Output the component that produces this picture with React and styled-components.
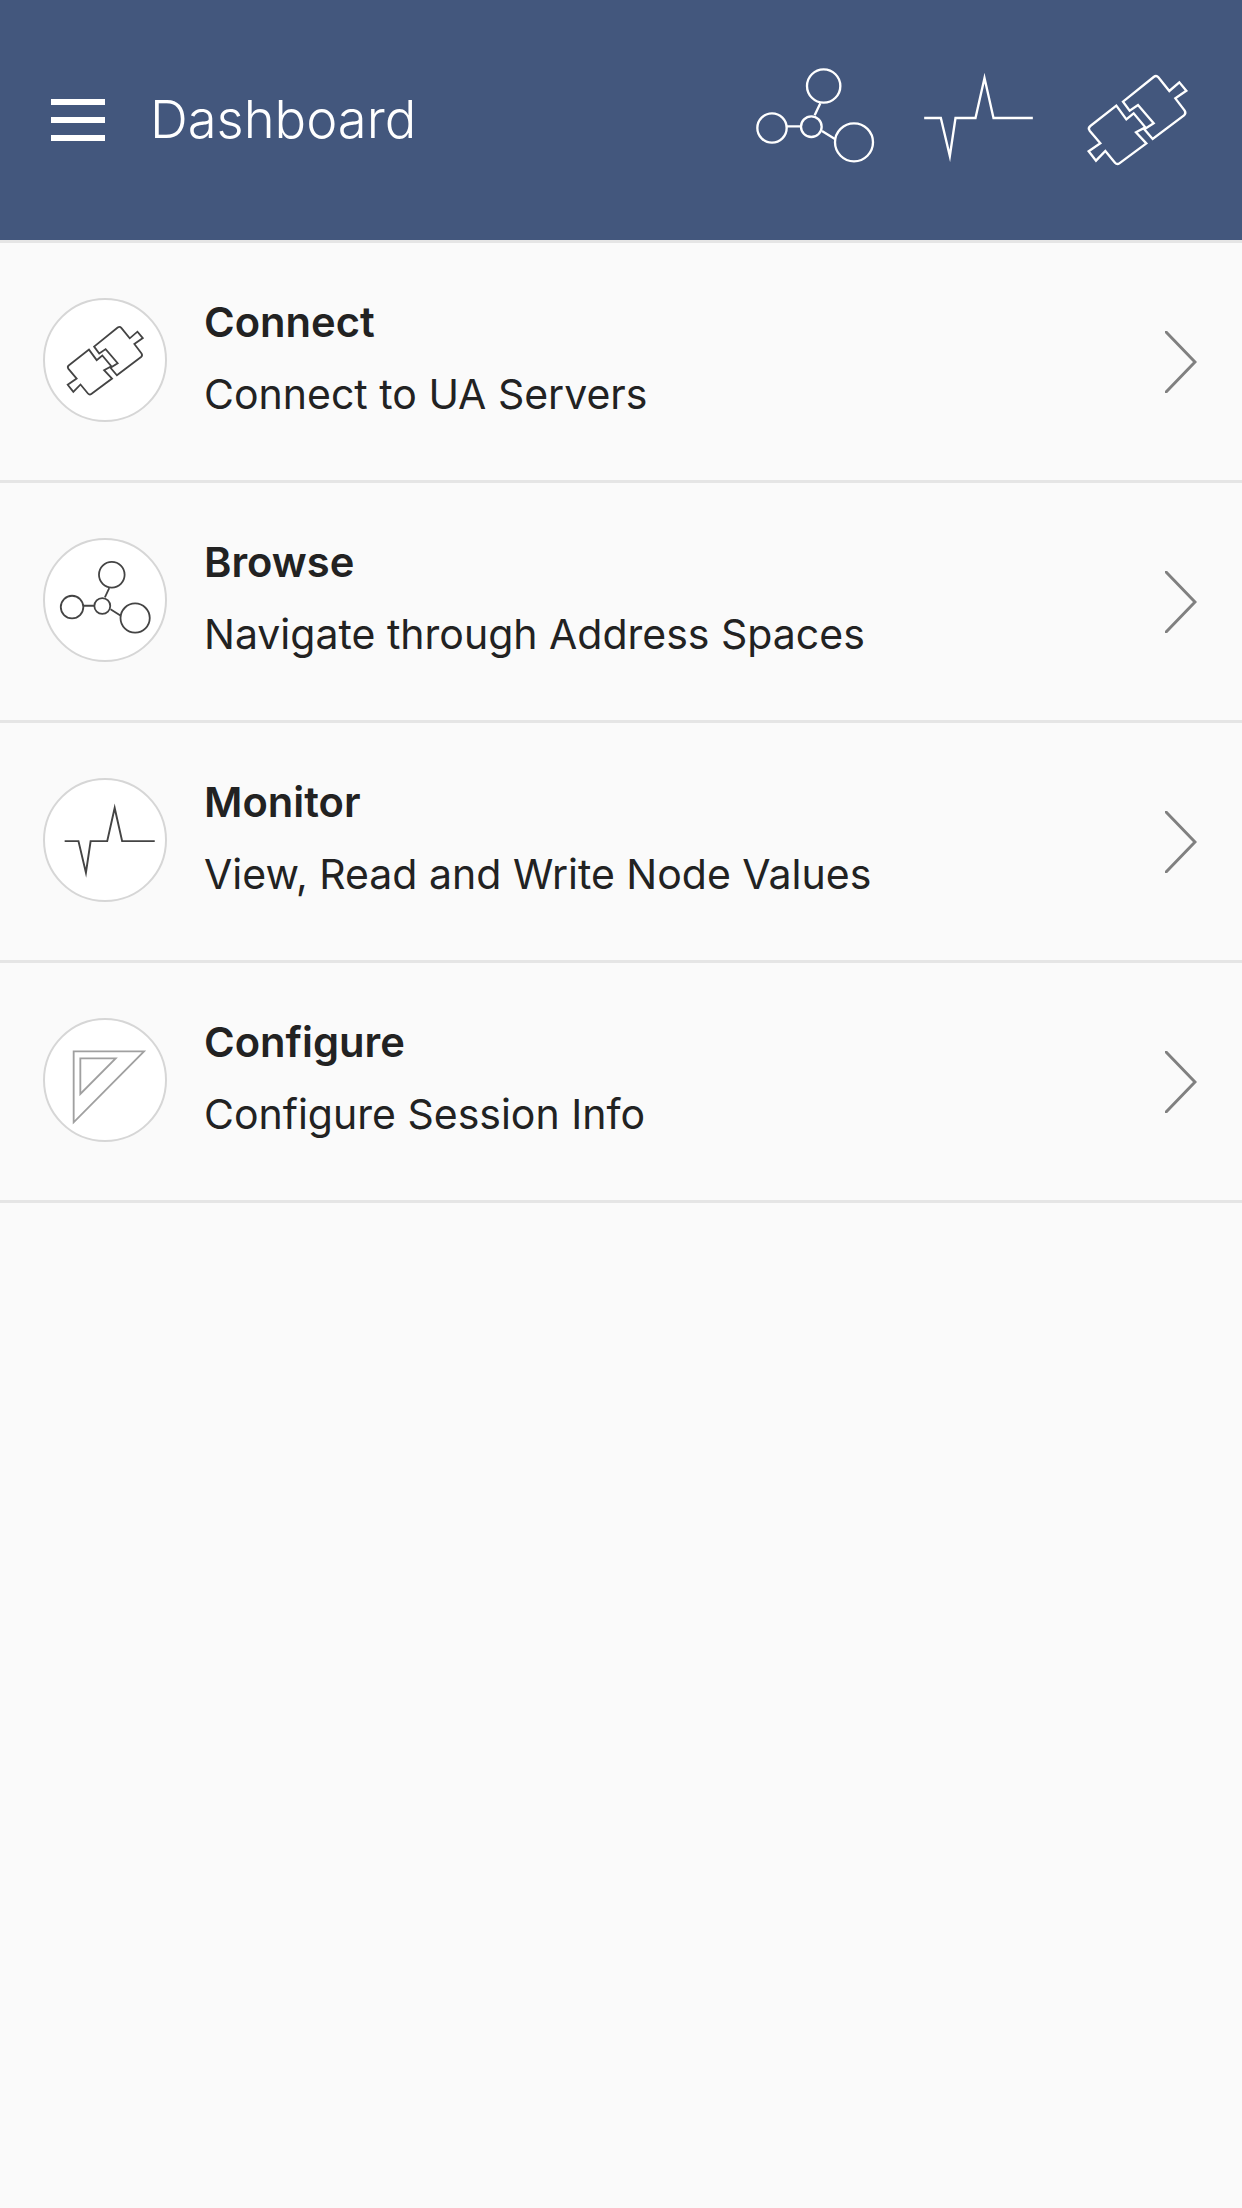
import React from "react";
import styled, { createGlobalStyle } from "styled-components";

const GlobalStyle = createGlobalStyle`
  html, body {
    margin: 0;
    padding: 0;
    background: #fafafa;
    font-family: Inter, "Noto Sans", sans-serif;
  }
`;

const Page = styled.div`
  width: 1242px;
  min-height: 2208px;
  background: #fafafa;
  color: #222;
`;

const Header = styled.header`
  height: 240px;
  background: #43577d;
  display: flex;
  align-items: center;
  padding: 0 54px 0 51px;
  color: #fff;
`;

const MenuButton = styled.div`
  width: 54px;
  height: 42px;
  flex: none;
  display: flex;
  flex-direction: column;
  justify-content: space-between;
  span {
    display: block;
    height: 6px;
    background: #fff;
  }
`;

const Title = styled.h1`
  margin: 0 0 2px 45px;
  font-size: 52.5px;
  font-weight: 300;
  line-height: 60px;
  flex: 1;
`;

const HeaderIcon = styled.svg`
  display: block;
  flex: none;
  height: 120px;
  width: ${(p) => p.$w}px;
  margin-left: ${(p) => p.$gap}px;
  overflow: visible;
  fill: none;
  stroke: #fff;
  stroke-width: 7;
  stroke-miterlimit: 20;
`;

const List = styled.ul`
  list-style: none;
  margin: 0;
  padding: 0;
  border-top: 3px solid #e5e5e5;
`;

const Row = styled.li`
  height: 237px;
  border-bottom: 3px solid #e5e5e5;
  display: flex;
  align-items: center;
  padding: 0 45px 0 42.5px;
`;

const Badge = styled.div`
  width: 124px;
  height: 124px;
  box-sizing: border-box;
  flex: none;
  margin-bottom: 4px;
  border: 2px solid #d6d6d6;
  border-radius: 50%;
  background: #fff;
  display: flex;
  align-items: center;
  justify-content: center;
`;

const BadgeIcon = styled.svg`
  display: block;
  flex: none;
  width: 110px;
  height: 110px;
  fill: none;
  stroke: ${(p) => p.$color || "#444"};
  stroke-width: ${(p) => p.$stroke || 7};
  stroke-miterlimit: 20;
`;

const Copy = styled.div`
  flex: 1;
  margin: 0 0 8px 37.5px;
`;

const Name = styled.div`
  font-size: 41.7px;
  font-weight: 600;
  line-height: 48px;
  margin-bottom: 24px;
`;

const Detail = styled.div`
  font-size: 41px;
  font-weight: 400;
  line-height: 48px;
`;

const Chevron = styled.svg`
  display: block;
  flex: none;
  width: 32px;
  height: 62px;
  fill: none;
  stroke: #808080;
  stroke-width: 3;
  stroke-linecap: round;
`;

const GraphShape = () => (
  <>
    <circle cx="310" cy="138" r="50" />
    <circle cx="155" cy="264" r="44" />
    <circle cx="273" cy="260" r="31" />
    <circle cx="401" cy="307" r="57" />
    <path d="M199 259H242M283 226L300 190M305 273L345 298" />
  </>
);

const PulseShape = () => (
  <path d="M612 234H662L689 348L706 234H766L793 114L820 234H938" />
);

const PlugShape = () => (
  <>
    <path d="M1188 197L1218 238L1240 220L1275 262L1247 277L1278 310L1197 370Q1190 375 1184 368L1155 333L1127 362L1105 334L1140 310L1108 272Q1102 264 1110 258Z" />
    <path d="M1300 111Q1308 105 1314 112L1347 153L1377 127L1398 152L1365 175L1393 212Q1398 220 1391 226L1297 297L1272 268L1300 250L1253 195L1228 212L1208 185Z" />
  </>
);

const SquareShape = () => (
  <>
    <path d="M129 137H340L129 350Z" />
    <path d="M149 158H255L149 265Z" />
  </>
);

const items = [
  {
    name: "Connect",
    detail: "Connect to UA Servers",
    viewBox: "1036 23 429 429",
    shape: <PlugShape />,
  },
  {
    name: "Browse",
    detail: "Navigate through Address Spaces",
    viewBox: "69 22 429 429",
    shape: <GraphShape />,
  },
  {
    name: "Monitor",
    detail: "View, Read and Write Node Values",
    viewBox: "559 31 398 398",
    shape: <PulseShape />,
  },
  {
    name: "Configure",
    detail: "Configure Session Info",
    viewBox: "58 58 330 330",
    shape: <SquareShape />,
    color: "#a0a0a0",
    stroke: 5.5,
  },
];

const App = () => {
  return (
    <Page>
      <GlobalStyle />
      <Header>
        <MenuButton>
          <span />
          <span />
          <span />
        </MenuButton>
        <Title>Dashboard</Title>
        <HeaderIcon viewBox="107 60 360 360" $w={120} $gap={0}>
          <GraphShape />
        </HeaderIcon>
        <HeaderIcon viewBox="609 60 332 360" $w={111} $gap={47}>
          <PulseShape />
        </HeaderIcon>
        <HeaderIcon viewBox="1100 60 303 360" $w={101} $gap={53}>
          <PlugShape />
        </HeaderIcon>
      </Header>
      <List>
        {items.map((item) => (
          <Row key={item.name}>
            <Badge>
              <BadgeIcon viewBox={item.viewBox} $color={item.color} $stroke={item.stroke}>
                {item.shape}
              </BadgeIcon>
            </Badge>
            <Copy>
              <Name>{item.name}</Name>
              <Detail>{item.detail}</Detail>
            </Copy>
            <Chevron viewBox="0 0 32 62">
              <path d="M1 1L30 31L1 61" />
            </Chevron>
          </Row>
        ))}
      </List>
    </Page>
  );
};

export default App;
